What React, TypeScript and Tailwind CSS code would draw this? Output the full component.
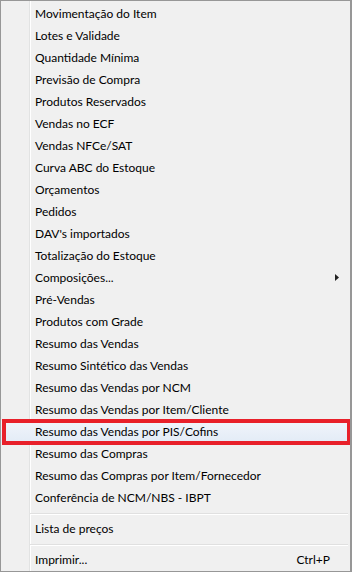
import React from 'react';

const items = [
  'Movimentação do Item',
  'Lotes e Validade',
  'Quantidade Mínima',
  'Previsão de Compra',
  'Produtos Reservados',
  'Vendas no ECF',
  'Vendas NFCe/SAT',
  'Curva ABC do Estoque',
  'Orçamentos',
  'Pedidos',
  "DAV's importados",
  'Totalização do Estoque',
  'Composições...',
  'Pré-Vendas',
  'Produtos com Grade',
  'Resumo das Vendas',
  'Resumo Sintético das Vendas',
  'Resumo das Vendas por NCM',
  'Resumo das Vendas por Item/Cliente',
  'Resumo das Vendas por PIS/Cofins',
  'Resumo das Compras',
  'Resumo das Compras por Item/Fornecedor',
  'Conferência de NCM/NBS - IBPT',
];

const MenuItem = ({ label, shortcut, submenu, active }: { label: string; shortcut?: string; submenu?: boolean; active?: boolean }) => (
  <div
    className={`relative flex items-center h-[22px] pl-[34px] pr-[20px] ${
      active ? 'bg-gradient-to-b from-[#f1f5fb] to-[#e2ebf6]' : ''
    }`}
  >
    <span className="flex-1 whitespace-nowrap">{label}</span>
    {shortcut && <span className="whitespace-nowrap">{shortcut}</span>}
    {submenu && (
      <svg className="absolute right-[11px] top-[7px]" width="4" height="7" viewBox="0 0 4 7">
        <path d="M0 0 L4 3.5 L0 7 Z" fill="#222" />
      </svg>
    )}
  </div>
);

const Separator = () => (
  <div className="h-[9px] flex flex-col justify-center pl-[29px] pr-[2px]">
    <div className="h-px bg-[#e0e0e0]" />
    <div className="h-px bg-white" />
  </div>
);

export default function App() {
  return (
    <div
      className="relative w-[352px] h-[572px] bg-[#f0f0f0] border border-r-2 border-[#979797] text-[12px] text-black overflow-hidden"
      style={{ fontFamily: 'Lato, "Noto Sans", sans-serif' }}
    >
      {/* gutter line */}
      <div className="absolute left-[28px] top-0 bottom-0 w-[2px] flex">
        <div className="w-px bg-[#e2e3e3]" />
        <div className="w-px bg-white" />
      </div>

      <div className="relative pt-[2px]">
        {items.map((label, i) => (
          <MenuItem key={label} label={label} submenu={i === 12} active={i === 19} />
        ))}
        <Separator />
        <MenuItem label="Lista de preços" />
        <Separator />
        <MenuItem label="Imprimir..." shortcut="Ctrl+P" />
      </div>

      {/* red highlight annotation */}
      <div className="absolute left-px top-[418px] w-[349px] h-[26px] border-4 border-[#e8202a]" />
    </div>
  );
}
